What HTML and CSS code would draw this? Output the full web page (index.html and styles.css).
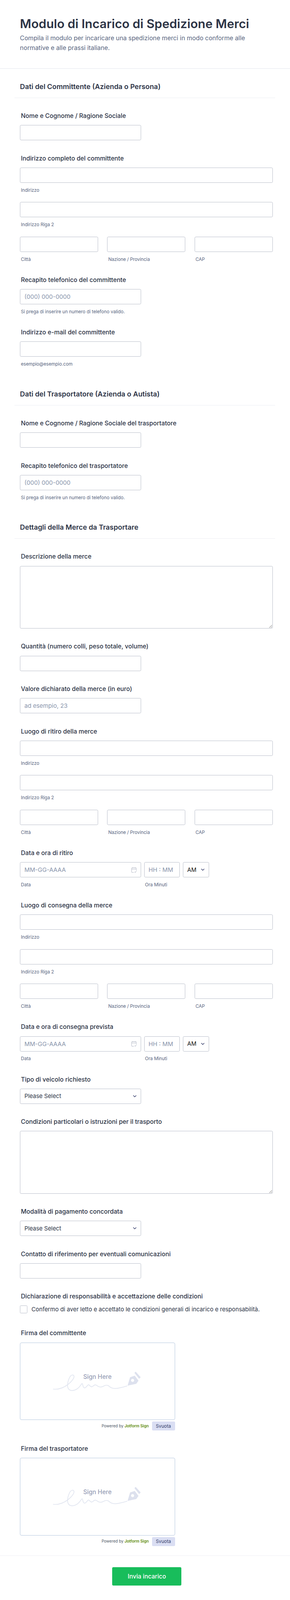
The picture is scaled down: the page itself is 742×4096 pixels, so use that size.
FILE: index.html
```html
<!DOCTYPE html>
<html lang="it">
<head>
<meta charset="utf-8">
<title>Modulo di Incarico di Spedizione Merci</title>
<link rel="stylesheet" href="styles.css">
</head>
<body>
<svg class="defs" width="0" height="0" aria-hidden="true">
  <symbol id="chev" viewBox="0 0 12 8"><path d="M1.200 1.500 6 6.200l4.800-4.700" fill="none" stroke="#343c6a" stroke-width="1.800"/></symbol>
  <symbol id="cal" viewBox="0 0 17 18"><path d="M4.500.5v3M12.500.5v3M1 6.500h15M8 17H3a2 2 0 0 1-2-2V4a2 2 0 0 1 2-2h11a2 2 0 0 1 2 2v8" fill="none" stroke="#b8bdc9" stroke-width="1.400"/><path d="m10.500 15 1.800 1.800 3.700-3.800" fill="none" stroke="#b8bdc9" stroke-width="1.400"/></symbol>
  <symbol id="sign" viewBox="0 0 496 249">
    <path d="M106 148C125 150 140 143 153 133C167 122 177 108 170 103C158 99 150 128 152 141C155 156 172 155 184 146C192 140 195 132 198 130C201 130 200 146 207 144C213 142 216 133 219 134C224 136 225 143 231 140C236 137 238 132 243 135C250 140 257 144 266 139C272 135 278 134 284 138C291 146 303 147 314 145C325 143 333 141 342 138" fill="none" stroke="#e3e7f1" stroke-width="2.400" stroke-linecap="round"/>
    <path fill-rule="evenodd" fill="#dde1ee" d="M344 137 352 110 367 105 379 121 372 131ZM360 115a5 5 0 1 0 .1 0Z"/>
    <path fill="#dde1ee" d="M366 96 370 92 386 110 381 115Z"/>
  </symbol>
</svg>
<main class="form">
  <header class="head">
    <h1>Modulo di Incarico di Spedizione Merci</h1>
    <p>Compila il modulo per incaricare una spedizione merci in modo conforme alle normative e alle prassi italiane.</p>
  </header>
  <div class="body">
    <h2>Dati del Committente (Azienda o Persona)</h2>

    <div class="field">
      <label class="lab">Nome e Cognome / Ragione Sociale</label>
      <input class="inp half" type="text">
    </div>

    <div class="field">
      <label class="lab">Indirizzo completo del committente</label>
      <input class="inp" type="text"><span class="sub">Indirizzo</span>
      <input class="inp next" type="text"><span class="sub">Indirizzo Riga 2</span>
      <div class="tri next">
        <div><input class="inp" type="text"><span class="sub">Città</span></div>
        <div><input class="inp" type="text"><span class="sub">Nazione / Provincia</span></div>
        <div><input class="inp" type="text"><span class="sub">CAP</span></div>
      </div>
    </div>

    <div class="field">
      <label class="lab">Recapito telefonico del committente</label>
      <input class="inp half" type="text" placeholder="(000) 000-0000"><span class="sub">Si prega di inserire un numero di telefono valido.</span>
    </div>

    <div class="field">
      <label class="lab">Indirizzo e-mail del committente</label>
      <input class="inp half" type="text"><span class="sub">esempio@esempio.com</span>
    </div>

    <h2 class="later">Dati del Trasportatore (Azienda o Autista)</h2>

    <div class="field">
      <label class="lab">Nome e Cognome / Ragione Sociale del trasportatore</label>
      <input class="inp half" type="text">
    </div>

    <div class="field">
      <label class="lab">Recapito telefonico del trasportatore</label>
      <input class="inp half" type="text" placeholder="(000) 000-0000"><span class="sub">Si prega di inserire un numero di telefono valido.</span>
    </div>

    <h2 class="later">Dettagli della Merce da Trasportare</h2>

    <div class="field">
      <label class="lab">Descrizione della merce</label>
      <textarea class="area"></textarea>
    </div>

    <div class="field">
      <label class="lab">Quantità (numero colli, peso totale, volume)</label>
      <input class="inp half" type="text">
    </div>

    <div class="field">
      <label class="lab">Valore dichiarato della merce (in euro)</label>
      <input class="inp half" type="text" placeholder="ad esempio, 23">
    </div>

    <div class="field">
      <label class="lab">Luogo di ritiro della merce</label>
      <input class="inp" type="text"><span class="sub">Indirizzo</span>
      <input class="inp next" type="text"><span class="sub">Indirizzo Riga 2</span>
      <div class="tri next">
        <div><input class="inp" type="text"><span class="sub">Città</span></div>
        <div><input class="inp" type="text"><span class="sub">Nazione / Provincia</span></div>
        <div><input class="inp" type="text"><span class="sub">CAP</span></div>
      </div>
    </div>

    <div class="field">
      <label class="lab">Data e ora di ritiro</label>
      <div class="dt">
        <div class="dt-date"><div class="wrap"><input class="inp" type="text" placeholder="MM-GG-AAAA"><svg class="ico-cal"><use href="#cal"/></svg></div><span class="sub">Data</span></div>
        <div class="dt-time"><input class="inp" type="text" placeholder="HH : MM"><span class="sub">Ora Minuti</span></div>
        <div class="dt-ampm wrap"><select class="sel ampm"><option>AM</option></select><svg class="ico-chev"><use href="#chev"/></svg></div>
      </div>
    </div>

    <div class="field">
      <label class="lab">Luogo di consegna della merce</label>
      <input class="inp" type="text"><span class="sub">Indirizzo</span>
      <input class="inp next" type="text"><span class="sub">Indirizzo Riga 2</span>
      <div class="tri next">
        <div><input class="inp" type="text"><span class="sub">Città</span></div>
        <div><input class="inp" type="text"><span class="sub">Nazione / Provincia</span></div>
        <div><input class="inp" type="text"><span class="sub">CAP</span></div>
      </div>
    </div>

    <div class="field">
      <label class="lab">Data e ora di consegna prevista</label>
      <div class="dt">
        <div class="dt-date"><div class="wrap"><input class="inp" type="text" placeholder="MM-GG-AAAA"><svg class="ico-cal"><use href="#cal"/></svg></div><span class="sub">Data</span></div>
        <div class="dt-time"><input class="inp" type="text" placeholder="HH : MM"><span class="sub">Ora Minuti</span></div>
        <div class="dt-ampm wrap"><select class="sel ampm"><option>AM</option></select><svg class="ico-chev"><use href="#chev"/></svg></div>
      </div>
    </div>

    <div class="field">
      <label class="lab">Tipo di veicolo richiesto</label>
      <div class="wrap half"><select class="sel"><option>Please Select</option></select><svg class="ico-chev"><use href="#chev"/></svg></div>
    </div>

    <div class="field">
      <label class="lab">Condizioni particolari o istruzioni per il trasporto</label>
      <textarea class="area"></textarea>
    </div>

    <div class="field">
      <label class="lab">Modalità di pagamento concordata</label>
      <div class="wrap half"><select class="sel"><option>Please Select</option></select><svg class="ico-chev"><use href="#chev"/></svg></div>
    </div>

    <div class="field">
      <label class="lab">Contatto di riferimento per eventuali comunicazioni</label>
      <input class="inp half" type="text">
    </div>

    <div class="field">
      <label class="lab">Dichiarazione di responsabilità e accettazione delle condizioni</label>
      <div class="check"><span class="box"></span><span class="check-text">Confermo di aver letto e accettato le condizioni generali di incarico e responsabilità.</span></div>
    </div>

    <div class="field">
      <label class="lab">Firma del committente</label>
      <div class="pad"><svg class="pad-art"><use href="#sign"/></svg><span class="pad-text">Sign Here</span></div>
      <div class="pad-foot"><span class="powered">Powered by <b>Jotform Sign</b></span><button class="clear" type="button">Svuota</button></div>
    </div>

    <div class="field">
      <label class="lab">Firma del trasportatore</label>
      <div class="pad"><svg class="pad-art"><use href="#sign"/></svg><span class="pad-text">Sign Here</span></div>
      <div class="pad-foot"><span class="powered">Powered by <b>Jotform Sign</b></span><button class="clear" type="button">Svuota</button></div>
    </div>
  </div>
  <footer class="foot"><button class="send" type="button">Invia incarico</button></footer>
</main>
</body>
</html>
```
FILE: styles.css
```css
* { box-sizing: border-box; }
html, body { height: 4096px; }
body { margin: 0; background: #fff; font-family: Inter, "Liberation Sans", sans-serif; color: #2c3345; }
.defs { position: absolute; }
.form { width: 100%; height: 4096px; overflow: hidden; }
.head { height: 176.3px; padding: 38.3px 43.9px 0 51.1px; border-bottom: 1px solid #e4e6ec; }
h1 { margin: 0; font-size: 31.35px; line-height: 46.3px; font-weight: 600; }
.head p { margin: 0; font-size: 15.8px; line-height: 25.5px; color: #57647e; }
.body { padding: 33.5px 43.9px 0 51.1px; }
h2 { margin: 0 -5.6px 0 -14.4px; padding: 0 0 16px 14.4px; font-size: 17.87px; line-height: 23.9px; font-weight: 600; border-bottom: 1px solid #eceef3; }
h2.later { margin-top: 57.84px; }
.field { margin-top: 38.3px; }
.lab { display: block; height: 16px; margin: 0 0 15.2px 2.4px; font-size: 15.7px; line-height: 16px; font-weight: 500; white-space: nowrap; }
.inp { display: block; width: 100%; height: 39.1px; padding: 0 10.4px; border: 1px solid #b8bdc9; border-radius: 3.2px; background: #fff; font: 400 15.16px Inter, sans-serif; color: #2c3345; outline: none; }
.inp::placeholder { color: #8894ab; opacity: 1; }
.half { width: 309.6px; }
.sub { display: block; margin: 12.8px 0 0 2.4px; font-size: 11.65px; line-height: 12.8px; color: #57647e; white-space: nowrap; }
.next { margin-top: 23.9px; }
.tri { display: grid; grid-template-columns: 199.5px 199.5px 200.3px; column-gap: 23.9px; }
.area { display: block; width: 647px; height: 160.4px; border: 1px solid #b8bdc9; border-radius: 3.2px; background: #fff; outline: none; resize: both; }
.dt { display: flex; align-items: flex-start; }
.dt-date { width: 309.6px; margin-right: 8px; }
.dt-time { width: 91px; margin-right: 8px; }
.dt-ampm { width: 67px; }
.wrap { position: relative; }
.sel { display: block; width: 100%; height: 39.1px; padding: 0 10.4px; appearance: none; border: 1px solid #b8bdc9; border-radius: 3.2px; background: #fff; font: 400 14.76px Inter, sans-serif; color: #2c3345; outline: none; }
.ampm { color: #111; }
.ico-chev { position: absolute; top: 16px; right: 11.2px; width: 9.6px; height: 6.4px; }
.ico-cal { position: absolute; top: 12.8px; right: 11.2px; width: 13.6px; height: 14.4px; }
.check { display: flex; align-items: center; margin-top: 0.8px; padding-bottom: 4.8px; }
.box { width: 19.1px; height: 20px; border: 1px solid #b8bdc9; border-radius: 2.4px; flex: none; }
.check-text { margin-left: 10.4px; font-size: 14.76px; line-height: 19.1px; white-space: nowrap; }
.pad { position: relative; width: 396.5px; height: 198.7px; border: 1px solid #b4c6de; border-radius: 4px; }
.pad-art { position: absolute; left: 0; top: 0; width: 395.7px; height: 198.7px; }
.pad-text { position: absolute; left: 0; right: 0; top: 77.4px; text-align: center; font-size: 15.56px; line-height: 19.1px; font-weight: 500; color: #979eb6; }
.pad-foot { display: flex; justify-content: flex-end; align-items: flex-start; width: 396.5px; margin-top: 4px; }
.powered { margin: 4.8px 8px 0 0; font-size: 10px; line-height: 12.8px; color: #4b5563; white-space: nowrap; }
.powered b { font-weight: 600; color: #5c8a09; }
.clear { width: 59px; height: 23.1px; padding: 0; border: 0; border-radius: 3.2px; background: #dadef3; font: 400 11.8px Inter, sans-serif; color: #343c6a; }
.foot { margin-top: 23.93px; height: 117.3px; padding: 29.3px 0 0 9.6px; border-top: 1px solid #eeeff4; display: flex; justify-content: center; align-items: flex-start; }
.send { width: 177px; height: 47px; border: 0; border-radius: 3.2px; background: #18bd5b; font: 500 15.4px Inter, sans-serif; color: #fff; }
```
